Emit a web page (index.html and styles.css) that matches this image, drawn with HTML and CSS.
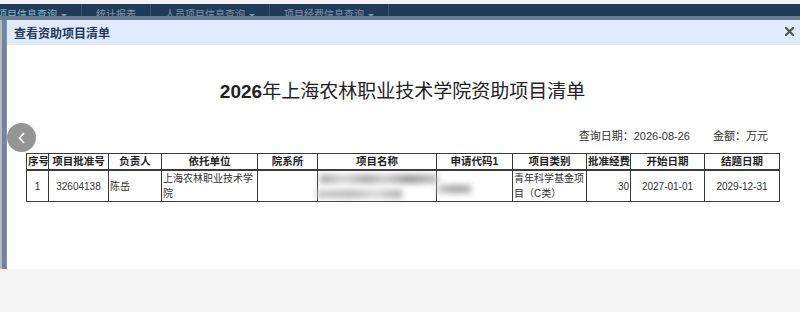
FILE: index.html
```html
<!DOCTYPE html>
<html lang="zh-CN">
<head>
  <meta charset="UTF-8" />
  <title>查看资助项目清单</title>
  <link rel="stylesheet" href="styles.css">
</head>
<body>

<div class="page">
  <div class="topline"></div>
  <div class="navbar">
    <div class="menu-item active">项目信息查询<span class="caret"></span></div>
    <div class="menu-item">统计报表</div>
    <div class="menu-item">人员项目信息查询<span class="caret"></span></div>
    <div class="menu-item">项目经费信息查询<span class="caret"></span></div>
  </div>

  <div class="modal">
    <div class="modal-head">
      <span class="modal-title">查看资助项目清单</span>
      <svg class="modal-close" width="9" height="9" viewBox="0 0 9 9">
        <path d="M1 1 L8 8 M8 1 L1 8" stroke="#555" stroke-width="2.2" stroke-linecap="square"/>
      </svg>
    </div>
    <div class="modal-body">
      <button class="back-btn">
        <svg width="10" height="14" viewBox="0 0 10 14"><path d="M7 2 L2.5 7 L7 12" fill="none" stroke="#fff" stroke-width="1.6"/></svg>
      </button>

      <h2 class="report-title"><b>2026</b>年上海农林职业技术学院资助项目清单</h2>
      <div class="report-info">
        <span>查询日期：2026-08-26</span>
        <span>金额：万元</span>
      </div>

      <table class="report">
        <colgroup>
          <col style="width:22px"><col style="width:60px"><col style="width:53px"><col style="width:96px">
          <col style="width:60px"><col style="width:119px"><col style="width:76px"><col style="width:74px">
          <col style="width:44px"><col style="width:74px"><col style="width:75px">
        </colgroup>
        <thead>
          <tr>
            <th>序号</th><th>项目批准号</th><th>负责人</th><th>依托单位</th><th>院系所</th><th>项目名称</th>
            <th>申请代码1</th><th>项目类别</th><th>批准经费</th><th>开始日期</th><th>结题日期</th>
          </tr>
        </thead>
        <tbody>
          <tr>
            <td class="c">1</td>
            <td class="c">32604138</td>
            <td>陈岳</td>
            <td>上海农林职业技术学院</td>
            <td></td>
            <td>
              <div class="blur b1"></div>
              <div class="blur b2"></div>
            </td>
            <td><div class="blur b3"></div></td>
            <td>青年科学基金项目（C类）</td>
            <td class="r">30</td>
            <td class="c">2027-01-01</td>
            <td class="c">2029-12-31</td>
          </tr>
        </tbody>
      </table>
    </div>
  </div>
</div>

<div class="footer"></div>

</body>
</html>
```

FILE: styles.css
```css
body {
  margin: 0;
  background: #f5f5f5;
  font-family: "Liberation Sans", "Noto Sans CJK SC", sans-serif;
  color: #222;
}
.page {
  position: relative;
  height: 269px;
  background: linear-gradient(to right, #b7bbc1 2px, #6e84a0 2px);
  overflow: hidden;
}
.topline {
  height: 4px;
  background: #f2f2f2;
}
.navbar {
  height: 12px;
  background: #1f3b5a;
  display: flex;
  overflow: hidden;
  border-bottom: 4px solid #6b7b90;
}
.menu-item {
  padding: 0 14px;
  line-height: 21px;
  font-size: 10px;
  color: #8593a6;
  border-right: 1px solid #38506c;
  white-space: nowrap;
}
.menu-item.active {
  margin-left: -17px;
  color: #84bcc4;
}
.caret {
  display: inline-block;
  margin-left: 4px;
  vertical-align: middle;
  border-left: 3px solid transparent;
  border-right: 3px solid transparent;
  border-top: 3px solid #8593a6;
}
.modal {
  position: absolute;
  left: 6px;
  top: 20px;
  right: 0;
  bottom: 0;
  background: #fff;
  border-left: 1px solid #8a97a8;
}
.modal-head {
  height: 25px;
  background: #dfebfc;
  display: flex;
  align-items: center;
  justify-content: space-between;
  padding: 0 6px 0 7px;
}
.modal-title {
  font-size: 12px;
  font-weight: bold;
  color: #22385a;
  margin-top: -1px;
}
.modal-close {
  margin-top: -2px;
}
.modal-body {
  position: relative;
  padding: 35px 21px 0 19px;
}
.back-btn {
  position: absolute;
  left: 0;
  top: 78px;
  width: 29px;
  height: 29px;
  border: none;
  border-radius: 50%;
  background: #959595;
  display: flex;
  align-items: center;
  justify-content: center;
  padding: 0;
}
.report-title {
  margin: 0;
  text-align: center;
  font-size: 19px;
  line-height: 24px;
  font-weight: normal;
  color: #222;
}
.report-title b {
  font-weight: bold;
}
.report-info {
  margin-top: 24px;
  display: flex;
  justify-content: flex-end;
  gap: 23px;
  padding-right: 11px;
  font-size: 11px;
  line-height: 16px;
  color: #333;
}
.report {
  margin-top: 9px;
  width: 753px;
  table-layout: fixed;
  border-collapse: collapse;
  font-size: 10px;
}
.report th, .report td {
  border: 1px solid #3a3a3a;
  padding: 0 1px;
  line-height: 15px;
  overflow: visible;
}
.report th {
  font-size: 10.5px;
  font-weight: bold;
  text-align: center;
  white-space: nowrap;
  border-bottom-width: 2px;
  color: #222;
}
.report td {
  color: #333;
  vertical-align: middle;
  text-align: left;
}
.report td.c { text-align: center; }
.report td.r { text-align: right; }
.blur {
  height: 8px;
  filter: blur(3px);
  background: linear-gradient(to right, #9a9a9a, #cfcfcf 20%, #a0a0a0 40%, #c8c8c8 55%, #8c8c8c 75%, #bdbdbd);
}
.b1 {
  width: 118px;
  margin: 0 0 7px 1px;
}
.b2 {
  width: 86px;
  margin-left: -3px;
  background: linear-gradient(to right, #c8c8c8, #b4b4b4 40%, #d4d4d4 70%, #a4a4a4);
}
.b3 {
  width: 34px;
  margin: 6px 0 0 -1px;
  background: linear-gradient(to right, #cccccc, #a0a0a0 50%, #aaaaaa);
}
.footer {
  height: 43px;
  background: #f5f5f5;
}
```
